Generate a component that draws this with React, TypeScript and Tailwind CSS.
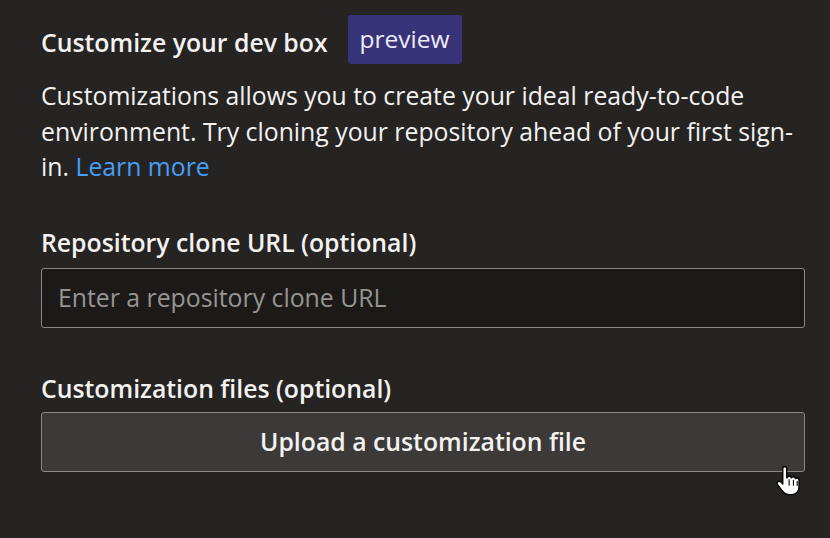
import React from "react";

function HandCursor() {
  return (
    <svg width="27" height="33" viewBox="0 0 22 27" className="absolute left-[776px] top-[465px]">
      <path
        d="M7,1.2 c1,0 1.7,0.7 1.7,1.7 v7.6 h0.3 c0.2,-0.8 1,-1.3 1.8,-1.3 c0.9,0 1.6,0.6 1.7,1.4 c0.3,-0.6 0.9,-1 1.6,-1 c0.9,0 1.7,0.7 1.7,1.6 c0.3,-0.4 0.8,-0.6 1.3,-0.6 c1,0 1.7,0.8 1.7,1.7 v5.5 c0,3.5 -2.5,6.5 -6,6.5 h-2.5 c-2.2,0 -3.6,-1 -4.8,-2.6 l-4.2,-5.5 c-0.6,-0.8 -0.5,-1.9 0.3,-2.5 c0.8,-0.6 1.9,-0.4 2.5,0.3 l1.4,1.6 v-12.7 c0,-1 0.8,-1.7 1.7,-1.7 z"
        fill="#ffffff"
        stroke="#000000"
        strokeWidth="1.1"
        strokeLinejoin="round"
      />
      <path d="M10.7,12 v4.5 M14.2,12.5 v4 M17.3,13.4 v3.4" stroke="#000000" strokeWidth="0.9" strokeLinecap="round" />
    </svg>
  );
}

export default function App() {
  return (
    <div
      className="relative w-[830px] h-[538px] bg-[#252423] text-[#f3f2f1] overflow-hidden"
      style={{ fontFamily: '"Open Sans", "Noto Sans", sans-serif' }}
    >
      <div className="flex flex-col pl-[41px] pr-[25px] pt-[15px]">
        <div className="flex items-center">
          <h1 className="text-[24.8px] font-semibold mt-[6px]">Customize your dev box</h1>
          <span className="ml-[20px] h-[49px] px-[12px] flex items-center rounded-[3px] bg-[#383278] text-[24.5px] text-[#ecebf7]">
            preview
          </span>
        </div>

        <p className="mt-[14px] text-[24.8px] leading-[35.5px]">
          Customizations allows you to create your ideal ready-to-code environment. Try cloning your repository ahead of your first sign-in.{" "}
          <span className="text-[#479ef5]">Learn more</span>
        </p>

        <label className="mt-[42px] text-[24.8px] font-semibold leading-[30px]">Repository clone URL (optional)</label>
        <div className="mt-[11px] h-[60px] rounded-[3px] border border-[#8a8886] bg-[#1b1a19] flex items-center px-[16px]">
          <span className="text-[24.8px] text-[#979593]">Enter a repository clone URL</span>
        </div>

        <label className="mt-[45px] text-[24.8px] font-semibold leading-[30px]">Customization files (optional)</label>
        <button className="mt-[9px] h-[60px] rounded-[3px] border border-[#8a8886] bg-[#3b3a39] text-[24.8px] font-semibold text-[#f3f2f1]">
          Upload a customization file
        </button>
      </div>
      <HandCursor />
    </div>
  );
}
